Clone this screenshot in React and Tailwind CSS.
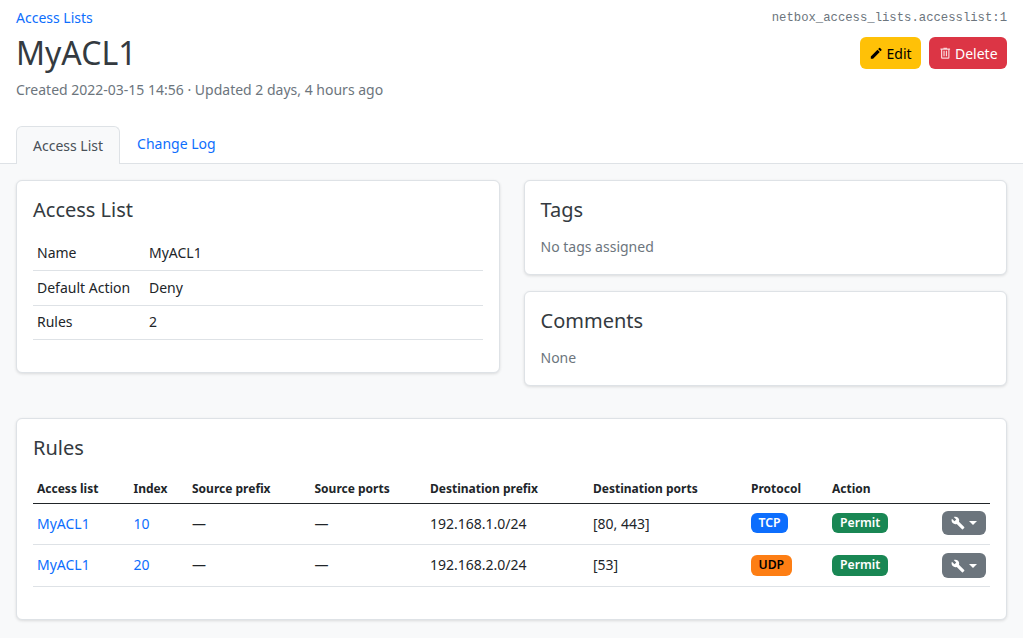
import React from "react";

const Wrench = ({ className }) => (
  <svg viewBox="0 0 24 24" className={className} fill="currentColor"><path d="M22.7 19l-9.1-9.1c.9-2.3.4-5-1.5-6.9-2-2-5-2.4-7.4-1.3L9 6 6 9 1.6 4.7C.4 7.1.9 10.1 2.9 12.1c1.9 1.9 4.6 2.4 6.9 1.5l9.1 9.1c.4.4 1 .4 1.4 0l2.3-2.3c.5-.4.5-1.1.1-1.4z" /></svg>
);
const Pencil = ({ className }) => (
  <svg viewBox="0 0 24 24" className={className} fill="currentColor"><path d="M3 17.25V21h3.75L17.81 9.94l-3.75-3.75L3 17.25zM20.71 7.04a1 1 0 0 0 0-1.41l-2.34-2.34a1 1 0 0 0-1.41 0l-1.83 1.83 3.75 3.75 1.83-1.83z" /></svg>
);
const Trash = ({ className }) => (
  <svg viewBox="0 0 24 24" className={className} fill="currentColor"><path d="M9 3v1H4v2h1v13a2 2 0 0 0 2 2h10a2 2 0 0 0 2-2V6h1V4h-5V3H9zM7 6h10v13H7V6zm2 2v9h2V8H9zm4 0v9h2V8h-2z" /></svg>
);

const Card = ({ className = "", children }) => (
  <div className={"bg-white border border-[#dee2e6] rounded-[6px] shadow-[0_1px_3px_rgba(0,0,0,0.12)] " + className}>{children}</div>
);

const KV = ({ k, v, h }) => (
  <div className={"flex items-center border-b border-[#dee2e6] px-1 " + h}>
    <div className="w-[112px]">{k}</div>
    <div>{v}</div>
  </div>
);

const cols = ["w-[96.5px]", "w-[58.5px]", "w-[122.5px]", "w-[115.5px]", "w-[163px]", "w-[158px]", "w-[81px]", "w-[110px]"];

const Badge = ({ bg, fg = "text-white", px = "px-[8px]", h = "h-[20px]", children }) => (
  <span className={"inline-flex items-center rounded-[6px] text-[12.25px] font-semibold leading-none " + h + " " + px + " " + bg + " " + fg}>{children}</span>
);

const Row = ({ idx, prefix, ports, proto, pbg, pfg, h, bh, btn, shift = "" }) => (
  <div className={"flex items-center border-b border-[#dee2e6] pb-[2px] pl-1 pr-1 " + h}>
    <div className={cols[0]}><a className="text-[#0d6efd]">MyACL1</a></div>
    <div className={cols[1]}><a className="text-[#0d6efd]">{idx}</a></div>
    <div className={cols[2]}>—</div>
    <div className={cols[3]}>—</div>
    <div className={cols[4]}>{prefix}</div>
    <div className={cols[5]}>{ports}</div>
    <div className={"flex " + cols[6] + " " + shift}><Badge bg={pbg} fg={pfg} h={bh} px="px-[7.5px]">{proto}</Badge></div>
    <div className={"flex " + cols[7] + " " + shift}><Badge bg="bg-[#198754]" h={bh}>Permit</Badge></div>
    <div className={"ml-auto flex w-[44px] items-center justify-center gap-[4px] rounded-[6px] bg-[#6c757d] text-white " + btn + " " + shift}>
      <Wrench className="h-[14px] w-[14px]" />
      <span className="h-0 w-0 border-x-[4px] border-t-[4px] border-x-transparent border-t-white" />
    </div>
  </div>
);

export default function App() {
  return (
    <div className="min-h-[638px] bg-[#f8f9fa] text-[14px] leading-[21px] text-[#212529]" style={{ fontFamily: '"Noto Sans", sans-serif' }}>
      <div className="h-[164px] border-b border-[#dee2e6] bg-white px-4">
        <div className="flex justify-between pt-[7px]">
          <div>
            <a className="block text-[#0d6efd]">Access Lists</a>
            <h1 className="mt-[6px] text-[32px] font-normal leading-[38px] text-[#343a40]">MyACL1</h1>
            <p className="mt-[7px] text-[#6c757d]">Created 2022-03-15 14:56 · Updated 2 days, 4 hours ago</p>
          </div>
          <div className="flex flex-col items-end">
            <div className="mt-[3px] text-[12.25px] leading-[17px] text-[#6c757d]" style={{ fontFamily: '"Liberation Mono", monospace' }}>netbox_access_lists.accesslist:1</div>
            <div className="mt-[10px] flex gap-2">
              <div className="flex h-[32px] w-[61px] items-center gap-[3px] rounded-[6px] bg-[#ffc107] pl-[9px] text-black"><Pencil className="h-[14.5px] w-[14.5px]" />Edit</div>
              <div className="flex h-[32px] w-[78px] items-center gap-[3px] rounded-[6px] bg-[#dc3545] pl-[8.5px] text-white"><Trash className="h-[14.5px] w-[14.5px] opacity-80" />Delete</div>
            </div>
          </div>
        </div>
        <div className="mt-[26px] flex">
          <div className="flex h-[38px] items-center rounded-t-[6px] border border-b-0 border-[#dee2e6] bg-[#f8f9fa] px-4 text-[#495057]">Access List</div>
          <a className="ml-px flex h-[34px] items-center px-4 text-[#0d6efd]">Change Log</a>
        </div>
      </div>

      <div className="px-4 pt-4">
        <div className="flex gap-6">
          <Card className="h-[193px] w-[484px] px-4 pt-[17px]">
            <h5 className="text-[20px] leading-[24px] text-[#343a40]">Access List</h5>
            <div className="mt-[14px]">
              <KV h="h-[34.5px]" k="Name" v="MyACL1" />
              <KV h="h-[35px]" k="Default Action" v="Deny" />
              <KV h="h-[34px] pb-[1px]" k="Rules" v="2" />
            </div>
          </Card>
          <div className="flex flex-1 flex-col gap-4">
            <Card className="h-[95px] pl-[15.5px] pr-4 pt-[17px]">
              <h5 className="text-[20px] leading-[24px] text-[#343a40]">Tags</h5>
              <p className="mt-[14px] text-[#6c757d]">No tags assigned</p>
            </Card>
            <Card className="h-[95px] pl-[15.5px] pr-4 pt-[17px]">
              <h5 className="text-[20px] leading-[24px] text-[#343a40]">Comments</h5>
              <p className="mt-[14px] text-[#6c757d]">None</p>
            </Card>
          </div>
        </div>

        <Card className="mt-[32px] h-[202px] px-4 pt-[17px]">
          <h5 className="text-[20px] leading-[24px] text-[#343a40]">Rules</h5>
          <div className="mt-[13px] flex h-[31px] items-center border-b border-[#212529] pl-1 text-[12px] font-bold">
            {["Access list", "Index", "Source prefix", "Source ports", "Destination prefix", "Destination ports", "Protocol", "Action"].map((h, i) => (
              <div key={h} className={cols[i]}>{h}</div>
            ))}
          </div>
          <Row h="h-[41px]" bh="h-[20px]" btn="h-[24px]" idx="10" prefix="192.168.1.0/24" ports="[80, 443]" proto="TCP" pbg="bg-[#0d6efd]" />
          <Row h="h-[42px]" bh="h-[21px]" btn="h-[25px]" shift="mt-[2px]" idx="20" prefix="192.168.2.0/24" ports="[53]" proto="UDP" pbg="bg-[#fd7e14]" pfg="text-black" />
        </Card>
      </div>
    </div>
  );
}
